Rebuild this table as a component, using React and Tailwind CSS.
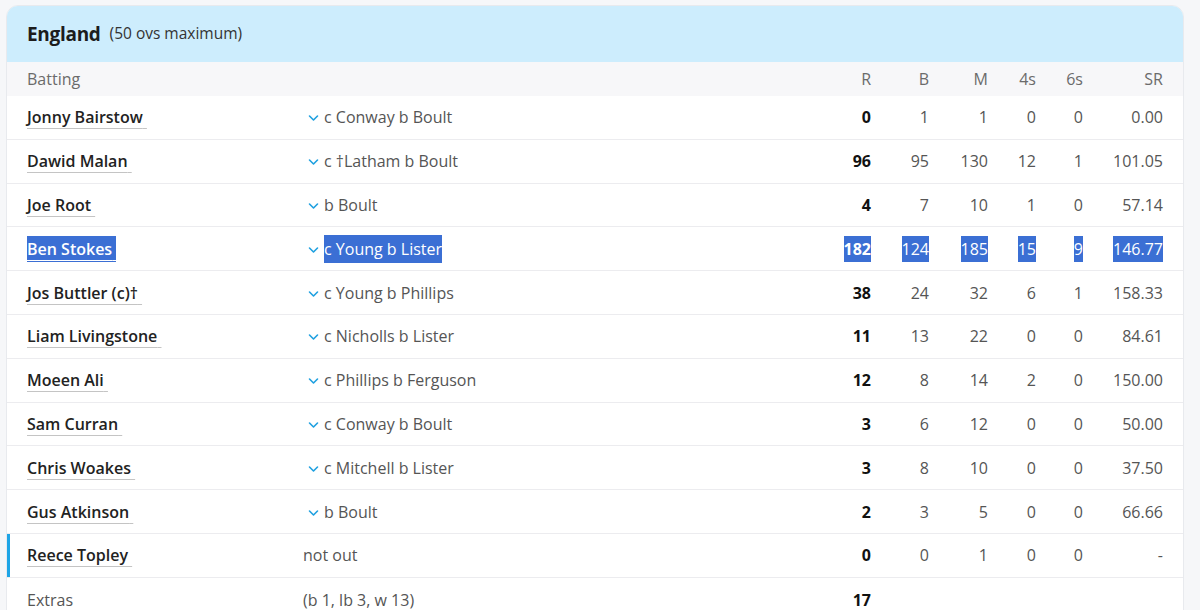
import React from 'react';

const rows = [
    { name: 'Jonny Bairstow', how: 'c Conway b Boult', r: '0', b: '1', m: '1', f: '0', s: '0', sr: '0.00' },
    { name: 'Dawid Malan', how: 'c \u2020Latham b Boult', r: '96', b: '95', m: '130', f: '12', s: '1', sr: '101.05' },
    { name: 'Joe Root', how: 'b Boult', r: '4', b: '7', m: '10', f: '1', s: '0', sr: '57.14' },
    { name: 'Ben Stokes', how: 'c Young b Lister', r: '182', b: '124', m: '185', f: '15', s: '9', sr: '146.77', selected: true },
    { name: 'Jos Buttler (c)\u2020', how: 'c Young b Phillips', r: '38', b: '24', m: '32', f: '6', s: '1', sr: '158.33' },
    { name: 'Liam Livingstone', how: 'c Nicholls b Lister', r: '11', b: '13', m: '22', f: '0', s: '0', sr: '84.61' },
    { name: 'Moeen Ali', how: 'c Phillips b Ferguson', r: '12', b: '8', m: '14', f: '2', s: '0', sr: '150.00' },
    { name: 'Sam Curran', how: 'c Conway b Boult', r: '3', b: '6', m: '12', f: '0', s: '0', sr: '50.00' },
    { name: 'Chris Woakes', how: 'c Mitchell b Lister', r: '3', b: '8', m: '10', f: '0', s: '0', sr: '37.50' },
    { name: 'Gus Atkinson', how: 'b Boult', r: '2', b: '3', m: '5', f: '0', s: '0', sr: '66.66' },
    { name: 'Reece Topley', how: 'not out', r: '0', b: '0', m: '1', f: '0', s: '0', sr: '-', notOut: true },
];

const grid = 'grid grid-cols-[276px_1fr_60px_58px_59px_48px_47px_80px] items-center pl-5 pr-5';

const Chevron = () => (
    <svg width="11" height="8" viewBox="0 0 11 8" className="ml-[5px] mr-[5px] mt-[2px] shrink-0">
        <polyline points="1.5,2 5.5,6 9.5,2" fill="none" stroke="#1ea0e0" strokeWidth="1.6" strokeLinecap="round" strokeLinejoin="round" />
    </svg>
);

const Sel = ({ on, className = '', children }) => (
    <span className={on ? `bg-[#3b6fd4] text-white py-[2px] ${className}` : className}>{children}</span>
);

const App = () => {
    return (
        <div className="min-h-[610px] bg-[#f6f7f9] pt-[5px] pl-[6px] pr-[16px] font-['Open_Sans','Noto_Sans',sans-serif]">
            <div className="rounded-t-[12px] border border-[#e8eaee] bg-white overflow-hidden">
                <div className="h-[56px] bg-[#cdedfd] flex items-center pl-5 gap-[9px]">
                    <span className="text-[19px] font-bold text-[#1c1c1c] tracking-[-0.3px]">England</span>
                    <span className="text-[15.5px] text-[#333]">(50 ovs maximum)</span>
                </div>

                <div className={`${grid} h-[34px] bg-[#f7f7f9] text-[16px] text-[#6b6b6b]`}>
                    <span>Batting</span>
                    <span></span>
                    <span className="text-right">R</span>
                    <span className="text-right">B</span>
                    <span className="text-right">M</span>
                    <span className="text-right">4s</span>
                    <span className="text-right">6s</span>
                    <span className="text-right">SR</span>
                </div>

                {rows.map((row) => (
                    <div
                        key={row.name}
                        className={`${grid} h-[43.8px] border-b border-[#ececef] text-[16px] text-[#555] ${row.notOut ? 'shadow-[inset_3px_0_0_#1ea5e6]' : ''}`}
                    >
                        <span>
                            <Sel on={row.selected} className="font-semibold">
                                <span className={`underline decoration-[#c4c4c4] underline-offset-[5px] decoration-1 ${row.selected ? 'text-white decoration-white' : 'text-[#222]'}`}>
                                    {row.name}{'\u00a0'}
                                </span>
                            </Sel>
                        </span>
                        <span className="flex items-center">
                            {!row.notOut && <Chevron />}
                            <Sel on={row.selected}>{row.how}</Sel>
                        </span>
                        <span className="text-right">
                            <Sel on={row.selected} className={`font-bold ${row.selected ? '' : 'text-[#111]'}`}>{row.r}</Sel>
                        </span>
                        <span className="text-right"><Sel on={row.selected}>{row.b}</Sel></span>
                        <span className="text-right"><Sel on={row.selected}>{row.m}</Sel></span>
                        <span className="text-right"><Sel on={row.selected}>{row.f}</Sel></span>
                        <span className="text-right"><Sel on={row.selected}>{row.s}</Sel></span>
                        <span className="text-right"><Sel on={row.selected}>{row.sr}</Sel></span>
                    </div>
                ))}

                <div className={`${grid} h-[44px] text-[16px] text-[#555]`}>
                    <span>Extras</span>
                    <span>(b 1, lb 3, w 13)</span>
                    <span className="text-right font-bold text-[#111]">17</span>
                    <span></span>
                    <span></span>
                    <span></span>
                    <span></span>
                    <span></span>
                </div>
            </div>
        </div>
    );
};

export default App;
